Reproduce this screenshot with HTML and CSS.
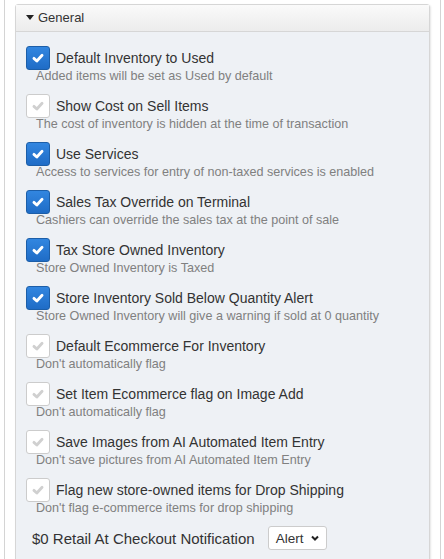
FILE: index.html
```html
<!DOCTYPE html>
<html lang="en">
<head>
    <meta charset="UTF-8">
    <meta name="viewport" content="width=device-width, initial-scale=1.0">
    <title>Settings</title>
    <link rel="stylesheet" href="styles.css">
</head>
<body>

<div class="page">
    <div class="panel">
        <div class="panel-heading">
            <span class="caret"></span>General
        </div>
        <div class="panel-body">

            <div class="option">
                <label class="option-label">
                    <span class="check checked"><svg viewBox="0 0 12 12"><polyline points="2.5,6.3 5,8.6 9.5,3.6"/></svg></span>
                    Default Inventory to Used
                </label>
                <div class="option-desc">Added items will be set as Used by default</div>
            </div>

            <div class="option">
                <label class="option-label">
                    <span class="check"><svg viewBox="0 0 12 12"><polyline points="2.5,6.3 5,8.6 9.5,3.6"/></svg></span>
                    Show Cost on Sell Items
                </label>
                <div class="option-desc">The cost of inventory is hidden at the time of transaction</div>
            </div>

            <div class="option">
                <label class="option-label">
                    <span class="check checked"><svg viewBox="0 0 12 12"><polyline points="2.5,6.3 5,8.6 9.5,3.6"/></svg></span>
                    Use Services
                </label>
                <div class="option-desc">Access to services for entry of non-taxed services is enabled</div>
            </div>

            <div class="option">
                <label class="option-label">
                    <span class="check checked"><svg viewBox="0 0 12 12"><polyline points="2.5,6.3 5,8.6 9.5,3.6"/></svg></span>
                    Sales Tax Override on Terminal
                </label>
                <div class="option-desc">Cashiers can override the sales tax at the point of sale</div>
            </div>

            <div class="option">
                <label class="option-label">
                    <span class="check checked"><svg viewBox="0 0 12 12"><polyline points="2.5,6.3 5,8.6 9.5,3.6"/></svg></span>
                    Tax Store Owned Inventory
                </label>
                <div class="option-desc">Store Owned Inventory is Taxed</div>
            </div>

            <div class="option">
                <label class="option-label">
                    <span class="check checked"><svg viewBox="0 0 12 12"><polyline points="2.5,6.3 5,8.6 9.5,3.6"/></svg></span>
                    Store Inventory Sold Below Quantity Alert
                </label>
                <div class="option-desc">Store Owned Inventory will give a warning if sold at 0 quantity</div>
            </div>

            <div class="option">
                <label class="option-label">
                    <span class="check"><svg viewBox="0 0 12 12"><polyline points="2.5,6.3 5,8.6 9.5,3.6"/></svg></span>
                    Default Ecommerce For Inventory
                </label>
                <div class="option-desc">Don't automatically flag</div>
            </div>

            <div class="option">
                <label class="option-label">
                    <span class="check"><svg viewBox="0 0 12 12"><polyline points="2.5,6.3 5,8.6 9.5,3.6"/></svg></span>
                    Set Item Ecommerce flag on Image Add
                </label>
                <div class="option-desc">Don't automatically flag</div>
            </div>

            <div class="option">
                <label class="option-label">
                    <span class="check"><svg viewBox="0 0 12 12"><polyline points="2.5,6.3 5,8.6 9.5,3.6"/></svg></span>
                    Save Images from AI Automated Item Entry
                </label>
                <div class="option-desc">Don't save pictures from AI Automated Item Entry</div>
            </div>

            <div class="option">
                <label class="option-label">
                    <span class="check"><svg viewBox="0 0 12 12"><polyline points="2.5,6.3 5,8.6 9.5,3.6"/></svg></span>
                    Flag new store-owned items for Drop Shipping
                </label>
                <div class="option-desc">Don't flag e-commerce items for drop shipping</div>
            </div>

            <div class="select-row">
                <span>$0 Retail At Checkout Notification</span>
                <div class="select">
                    Alert
                    <svg viewBox="0 0 10 10"><polyline points="2,3.5 5,6.5 8,3.5"/></svg>
                </div>
            </div>

        </div>
    </div>
</div>

</body>
</html>
```

FILE: styles.css
```css
body {
    font-family: "Liberation Sans", Arial, sans-serif;
    margin: 0;
    padding: 0;
    background-color: #fff;
    color: #333;
}
.page {
    margin: 0 3px 0 4px;
    border-left: 1px solid #d4d4d4;
    border-right: 1px solid #d4d4d4;
    padding: 4px 10px 0 10px;
    height: 100vh;
    box-sizing: border-box;
}
.panel {
    border: 1px solid #d6d6d6;
    border-radius: 3px 3px 0 0;
    box-shadow: 1px 1px 2px rgba(0, 0, 0, 0.1);
}
.panel-heading {
    height: 26px;
    line-height: 26px;
    padding: 0 10px;
    font-size: 13px;
    color: #333;
    background: linear-gradient(#fafafa, #ececec);
    border-bottom: 1px solid #d6d6d6;
}
.caret {
    display: inline-block;
    width: 0;
    height: 0;
    border-left: 4.5px solid transparent;
    border-right: 4.5px solid transparent;
    border-top: 5px solid #222;
    margin-right: 4px;
    vertical-align: 2px;
}
.panel-body {
    background-color: #eef1f5;
    padding: 14px 10px 10px 10px;
}
.option {
    margin-bottom: 10px;
}
.option-label {
    display: flex;
    align-items: center;
    gap: 6px;
    height: 24px;
    font-size: 14px;
    color: #333;
}
.check {
    width: 22px;
    height: 22px;
    border: 1px solid #ccc;
    border-radius: 3px;
    background-color: #fff;
    display: flex;
    align-items: center;
    justify-content: center;
}
.check svg {
    width: 14px;
    height: 14px;
    fill: none;
    stroke: #d0d0d0;
    stroke-width: 2.4;
    stroke-linecap: round;
    stroke-linejoin: round;
}
.check.checked {
    background: linear-gradient(#3286e0, #1f6cc6);
    border-color: #1c5ea8;
}
.check.checked svg {
    stroke: #fff;
}
.option-desc {
    margin-top: -2px;
    padding-left: 10px;
    font-size: 12.6px;
    line-height: 16px;
    color: #808080;
}
.select-row {
    display: flex;
    align-items: center;
    gap: 13px;
    padding-left: 6px;
    font-size: 15px;
    color: #333;
}
.select {
    display: flex;
    align-items: center;
    justify-content: space-between;
    width: 44px;
    height: 22px;
    padding: 0 6px 0 7px;
    border: 1px solid #ccc;
    border-radius: 3px;
    background-color: #fff;
    font-size: 13.5px;
}
.select svg {
    width: 10px;
    height: 10px;
    fill: none;
    stroke: #222;
    stroke-width: 2;
}
```
